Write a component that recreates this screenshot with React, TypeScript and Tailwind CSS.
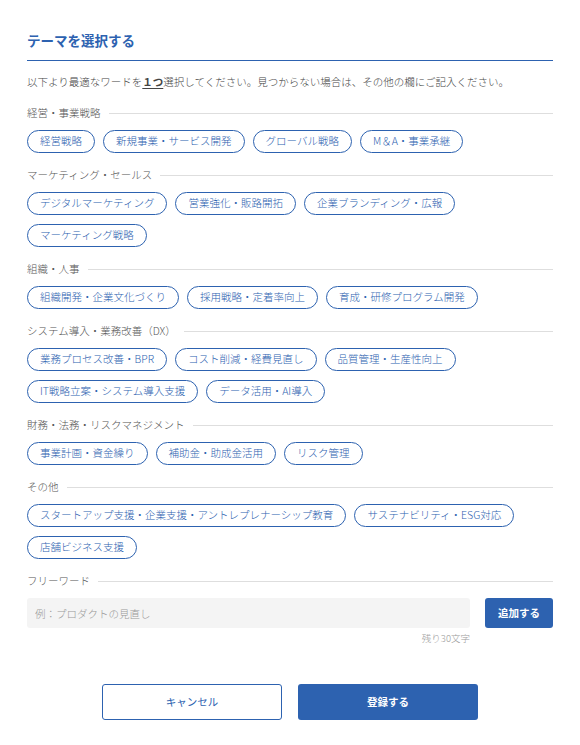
import { useState } from 'react';

const categories: { label: string; items: string[] }[] = [
  { label: '経営・事業戦略', items: ['経営戦略', '新規事業・サービス開発', 'グローバル戦略', 'M＆A・事業承継'] },
  {
    label: 'マーケティング・セールス',
    items: ['デジタルマーケティング', '営業強化・販路開拓', '企業ブランディング・広報', 'マーケティング戦略'],
  },
  { label: '組織・人事', items: ['組織開発・企業文化づくり', '採用戦略・定着率向上', '育成・研修プログラム開発'] },
  {
    label: 'システム導入・業務改善（DX）',
    items: ['業務プロセス改善・BPR', 'コスト削減・経費見直し', '品質管理・生産性向上', 'IT戦略立案・システム導入支援', 'データ活用・AI導入'],
  },
  { label: '財務・法務・リスクマネジメント', items: ['事業計画・資金繰り', '補助金・助成金活用', 'リスク管理'] },
  {
    label: 'その他',
    items: ['スタートアップ支援・企業支援・アントレプレナーシップ教育', 'サステナビリティ・ESG対応', '店舗ビジネス支援'],
  },
];

const SectionLabel = ({ children }: { children: React.ReactNode }) => (
  <div className="flex items-center gap-2 h-4">
    <span className="text-[10.5px] leading-4 font-light text-[#555]">{children}</span>
    <div className="flex-1 h-px bg-[#dedede]" />
  </div>
);

export default function App() {
  const [word, setWord] = useState('');

  return (
    <div className="min-h-[745px] bg-white font-['Noto_Sans_CJK_JP','Noto_Sans',sans-serif] px-[27px] pt-[30px]">
      {/* Header */}
      <h2 className="text-[13.5px] leading-5 font-bold text-[#2d62b0] pb-[10px] border-b border-[#2d62b0]">
        テーマを選択する
      </h2>
      <p className="mt-[13px] text-[10.5px] leading-4 font-light text-[#444]">
        以下より最適なワードを<span className="font-bold underline underline-offset-2">１つ</span>
        選択してください。見つからない場合は、その他の欄にご記入ください。
      </p>

      {/* Categories */}
      <div className="mt-[15px] flex flex-col gap-[14px]">
        {categories.map((c) => (
          <div key={c.label}>
            <SectionLabel>{c.label}</SectionLabel>
            <div className="mt-[9px] flex flex-wrap gap-x-2 gap-y-[9px]">
              {c.items.map((item) => (
                <button
                  key={item}
                  className="h-[23px] px-3 flex items-center rounded-full border border-[#2d62b0] text-[10.5px] leading-none font-light text-[#2d62b0] bg-white"
                >
                  {item}
                </button>
              ))}
            </div>
          </div>
        ))}

        {/* Free word */}
        <div>
          <SectionLabel>フリーワード</SectionLabel>
          <div className="mt-[9px] flex gap-[15px]">
            <div className="flex-1">
              <input
                value={word}
                onChange={(e) => setWord(e.target.value)}
                placeholder="例：プロダクトの見直し"
                className="w-full h-[30px] rounded-[3px] bg-[#f4f4f4] px-2 text-[10.5px] font-light text-[#333] placeholder:text-[#999] outline-none"
              />
              <div className="mt-[4px] text-right text-[9.5px] leading-3 font-light text-[#999]">残り30文字</div>
            </div>
            <button className="w-[68px] h-[30px] rounded-[3px] bg-[#2d62b0] text-white text-[10.5px] font-bold">
              追加する
            </button>
          </div>
        </div>
      </div>

      {/* Footer buttons */}
      <div className="mt-[40px] flex justify-center gap-4">
        <button className="w-[180px] h-[36px] rounded-[3px] border border-[#2d62b0] bg-white text-[#2d62b0] text-[10.5px] font-normal">
          キャンセル
        </button>
        <button className="w-[180px] h-[36px] rounded-[3px] bg-[#2d62b0] text-white text-[10.5px] font-bold">
          登録する
        </button>
      </div>
    </div>
  );
}
